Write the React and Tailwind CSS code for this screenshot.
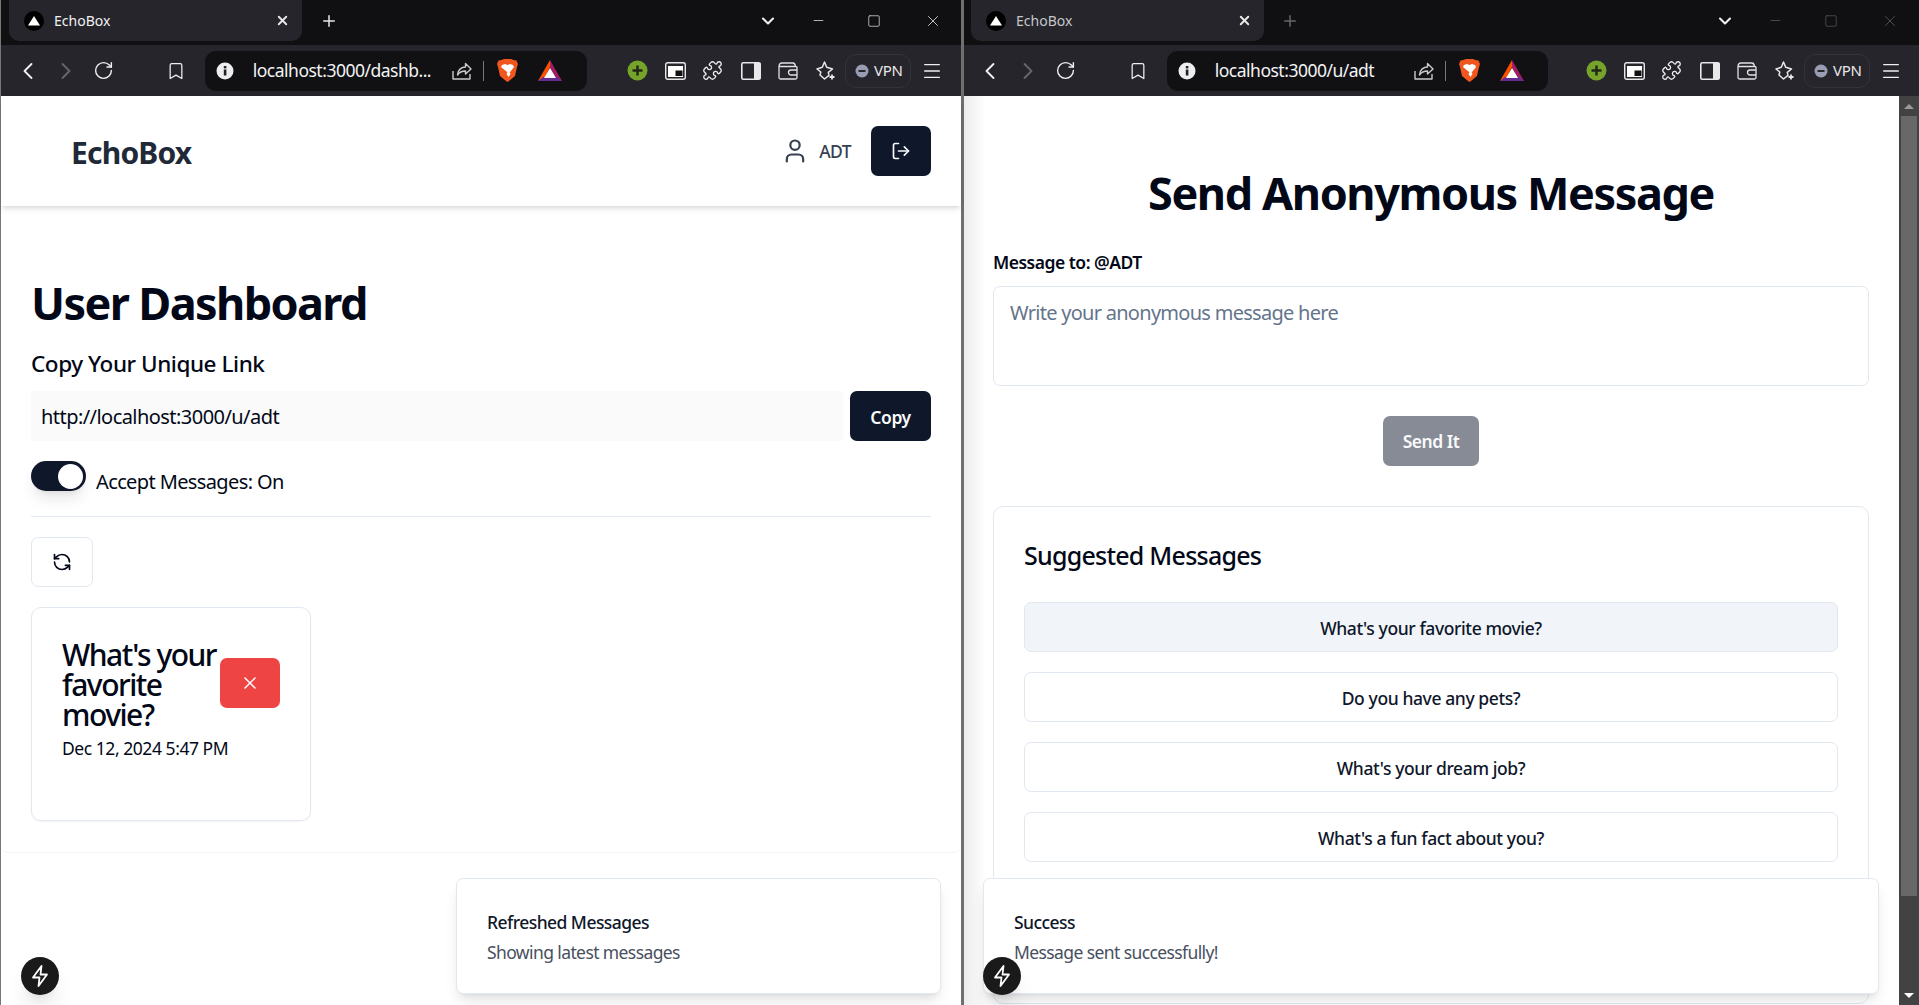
import React from "react";
import { ChevronLeft, ChevronRight, RotateCw, Bookmark, Puzzle, User, LogOut, RefreshCcw, X, Plus, ChevronDown, Minus, Square, Menu } from "lucide-react";

const Favicon = () => (
  <svg width="20" height="20" viewBox="0 0 20 20"><circle cx="10" cy="10" r="10" fill="#000" /><polygon points="10,5 16,14.5 4,14.5" fill="#fff" /></svg>
);
const Share = () => (
  <svg width="20" height="20" viewBox="0 0 20 20" fill="none" stroke="#c9c9ce" strokeWidth="1.4" strokeLinejoin="round"><path d="M1 10v8h17v-5" /><path d="M5.500 14c0-5 4-8 8-8V2.500l5.500 5.500-5.500 5V10c-4 0-6 1-8 4z" /></svg>
);
const Brave = () => (
  <svg width="21" height="23" viewBox="0 0 21 23">
    <path d="M4.500 1 7 0h7l2.500 1 3 .5L21 5l-1 3-2 9-6 5-1.500 1-1.500-1-6-5-2-9-1-3 1.500-3.500z" fill="#f0561d" />
    <path d="M5 6l3-1 2.500 1 2.500-1 3 1 1 2-3.500 4.500-1 .5 1 2-2 3-2-3 1-2-1-.5L4 8z" fill="#fff" />
  </svg>
);
const Bat = () => (
  <svg width="24" height="21" viewBox="0 0 24 21">
    <polygon points="12,0 24,21 17,21 12,11" fill="#9e1f63" />
    <polygon points="12,0 0,21 7,17 12,7" fill="#ff5000" />
    <polygon points="0,21 24,21 19,17 5,17" fill="#662d91" />
    <polygon points="12,8 18,18 6,18" fill="#fff" />
  </svg>
);
const GreenPlus = () => (
  <svg width="21" height="21" viewBox="0 0 21 21"><circle cx="10.500" cy="10.500" r="10" fill="#76a32a" /><path d="M10.500 5.500v10M5.500 10.500h10" stroke="#20261a" strokeWidth="2.400" /></svg>
);
const Pip = () => (
  <svg width="21" height="18" viewBox="0 0 21 18"><rect x="0.700" y="0.700" width="19.600" height="16.600" rx="2" fill="#26262c" stroke="#e8e8ea" strokeWidth="1.400" /><rect x="3" y="4" width="15" height="11" fill="#fff" /><rect x="10.500" y="8.500" width="7" height="5.500" fill="#111" /></svg>
);
const Side = () => (
  <svg width="20" height="18" viewBox="0 0 20 18"><rect x="0.800" y="0.800" width="18.400" height="16.400" rx="1.500" fill="none" stroke="#e8e8ea" strokeWidth="1.600" /><rect x="13" y="1" width="6.500" height="16" fill="#e8e8ea" /></svg>
);
const Wallet = () => (
  <svg width="20" height="18" viewBox="0 0 20 18" fill="none" stroke="#e2e2e4" strokeWidth="1.300"><path d="M1 4.500V15.500a1.500 1.500 0 0 0 1.500 1.500h15a1.500 1.500 0 0 0 1.500-1.500V5.500a1 1 0 0 0-1-1H1zM1 4.500C1 2.500 2 1 4 1h11c1.500 0 2 1 2.500 3" /><path d="M19 8h-6a2 2 0 0 0 0 5h6" /></svg>
);
const Spark = () => (
  <svg width="20" height="20" viewBox="0 0 20 20" fill="none" stroke="#e8e8ea" strokeWidth="1.500" strokeLinejoin="round"><path d="M8.500 1l2.200 5.300L16.500 8l-4.200 3.300.7 3-4.500 3.700L4 14l.8-3L1 8l5.300-1.700z" /><path d="M16 13.500v5M13.500 16h5" strokeWidth="1.800" /></svg>
);
const Bolt = ({ s = 18 }) => (
  <svg width={s} height={s + 4} viewBox="0 0 18 22" fill="none" stroke="#fff" strokeWidth="1.800" strokeLinejoin="round"><path d="M10.500 1 2 12.500h6.500L7.500 21 16 9.500H9.500z" /></svg>
);

const Ico = ({ children }) => <div className="w-[37.7px] h-[38px] flex items-center justify-center shrink-0">{children}</div>;

function Chrome({ url, pl, tabMl, dimPlus, dimWin, plusMl, chevMl, urlW, urlTextW, afterMl }) {
  const wc = dimWin ? "#5b5b60" : "#e8e8ea";
  return (
    <div className="shrink-0">
      <div className="h-[45px] bg-[#101013] flex items-start">
        <div className={`${tabMl} w-[293px] h-[41px] bg-[#25252b] rounded-[10px] rounded-t-none flex items-center pl-[15px] shrink-0`}>
          <Favicon />
          <span className={`ml-[10px] text-[14px] w-[221px] shrink-0 ${dimPlus ? "text-[#c6c6ca]" : "text-[#f0f0f2]"}`}>EchoBox</span>
          <X size={15} strokeWidth={3} color="#e8e8ea" />
        </div>
        <div className={`${plusMl} h-[41px] flex items-center`}>
          <Plus size={18} strokeWidth={2} color={dimPlus ? "#66666b" : "#e8e8ea"} />
        </div>
        <div className={`${chevMl} h-[41px] flex items-center`}>
          <ChevronDown size={20} strokeWidth={2.500} color="#f0f0f2" />
        </div>
        <div className="ml-[33px] h-[41px] flex items-center"><Minus size={15} strokeWidth={1.200} color={wc} /></div>
        <div className="ml-[41px] h-[41px] flex items-center"><Square size={14} strokeWidth={1.200} color={wc} /></div>
        <div className="ml-[43px] h-[41px] flex items-center"><X size={18} strokeWidth={1.100} color={wc} /></div>
      </div>
      <div className={`h-[51px] bg-[#25252b] flex items-center ${pl}`}>
        <Ico><ChevronLeft size={28} strokeWidth={1.600} color="#f0f0f2" /></Ico>
        <Ico><ChevronRight size={28} strokeWidth={1.600} color="#66666b" /></Ico>
        <Ico><RotateCw size={21} strokeWidth={1.600} color="#f0f0f2" /></Ico>
        <div className="ml-[35px]"><Ico><Bookmark size={20} strokeWidth={1.500} color="#f0f0f2" /></Ico></div>
        <div className={`ml-[10px] ${urlW} h-[40px] rounded-[11px] bg-[#111114] flex items-center pl-[8px] shrink-0`}>
          <div className="w-[24px] flex justify-center"><svg width="18" height="18" viewBox="0 0 18 18"><circle cx="9" cy="9" r="8.500" fill="#eeeef0" /><rect x="7.800" y="7.500" width="2.600" height="6" fill="#222" /><rect x="7.800" y="4" width="2.600" height="2.400" fill="#222" /></svg></div>
          <span className={`ml-[16px] ${urlTextW} text-[17.500px] text-[#f3f3f5] whitespace-nowrap tracking-[-0.5px]`}>{url}</span>
          <div className="w-[24px] flex justify-center"><Share /></div>
          <div className="ml-[9px] w-px h-[20px] bg-[#77777c]" />
          <div className="ml-[12px] w-[24px] flex justify-center"><Brave /></div>
          <div className="ml-[18px] w-[24px] flex justify-center"><Bat /></div>
        </div>
        <div className={afterMl}><Ico><GreenPlus /></Ico></div>
        <Ico><Pip /></Ico>
        <Ico><Puzzle size={21} strokeWidth={1.500} color="#f0f0f2" /></Ico>
        <Ico><Side /></Ico>
        <Ico><Wallet /></Ico>
        <Ico><Spark /></Ico>
        <div className="w-[66px] h-[34px] rounded-[11px] border border-[#323238] flex items-center pl-[9px] shrink-0">
          <svg width="14" height="14" viewBox="0 0 14 14"><circle cx="7" cy="7" r="6.500" fill="#9a9cb4" /><rect x="3.500" y="6" width="7" height="2" fill="#26262c" /></svg>
          <span className="ml-[5px] text-[15px] text-[#e8e8ea] tracking-[-0.2px]">VPN</span>
        </div>
        <div className="ml-[2px] w-[38px] flex justify-center shrink-0"><Menu size={22} strokeWidth={1.400} color="#f0f0f2" /></div>
      </div>
    </div>
  );
}

const Toast = ({ title, sub, cls }) => (
  <div className={`absolute top-[878px] h-[116px] bg-white border border-[#e2e8f0] rounded-[7px] shadow-lg flex flex-col justify-center pl-[30px] pt-[3px] text-[#020817] ${cls}`}>
    <div className="text-[17.500px] font-medium leading-[25px] text-[#0f172a] tracking-[-0.55px]">{title}</div>
    <div className="text-[17.500px] leading-[25px] mt-[5px] text-[#475060] tracking-[-0.6px]">{sub}</div>
  </div>
);

const Badge = ({ cls }) => (
  <div className={`absolute top-[957px] w-[38px] h-[38px] rounded-full bg-[#1a1a1a] shadow-xl flex items-center justify-center ${cls}`}><Bolt /></div>
);

function Suggest({ children, active }) {
  return (
    <div className={`h-[50px] pt-[2px] rounded-[7px] border border-[#e2e8f0] flex items-center justify-center text-[17.500px] font-medium text-[#0f172a] ${active ? "bg-[#f1f5f9]" : "bg-white"}`}>{children}</div>
  );
}

export default function App() {
  return (
    <div className="relative w-[1919px] h-[1005px] overflow-hidden flex bg-white font-['Noto_Sans',sans-serif] text-[#020817]">
      {/* Left window */}
      <div className="w-[964px] h-full shrink-0 flex flex-col border-l border-[#777] border-r-[3px] border-r-[#6f6f6f]">
        <Chrome url="localhost:3000/dashb..." pl="pl-[8px]" tabMl="ml-[8px]" plusMl="ml-[18px]" chevMl="ml-[420px]" urlW="w-[382px]" urlTextW="w-[197px]" afterMl="ml-[32px]" />
        <header className="h-[110px] shrink-0 flex items-center pl-[70px] pr-[30px] shadow-md bg-white">
          <span className="text-[30px] font-bold text-[#1f2937] tracking-[-0.8px] mt-[2px]">EchoBox</span>
          <div className="ml-auto flex items-center">
            <User size={28} strokeWidth={1.900} color="#374151" />
            <span className="ml-[10px] text-[17.500px] font-medium text-[#374151] tracking-[-0.6px]">ADT</span>
            <div className="ml-[20px] w-[60px] h-[50px] rounded-[7px] bg-[#0f172a] flex items-center justify-center"><LogOut size={20} strokeWidth={2} color="#f8fafc" /></div>
          </div>
        </header>
        <main className="mt-[10px] pl-[30px] pr-[30px] pb-[31px] rounded-b-[7px] border-b border-[#f1f3f6]">
          <h1 className="mt-[62px] text-[45px] leading-[50px] font-bold tracking-[-1.6px]">User Dashboard</h1>
          <h2 className="mt-[18px] text-[22.500px] leading-[35px] font-medium tracking-[-0.45px]">Copy Your Unique Link</h2>
          <div className="mt-[10px] flex">
            <div className="flex-1 h-[50px] bg-[#fafafa] flex items-center pl-[10px] pt-[1px] text-[20px] tracking-[-0.55px]">http://localhost:3000/u/adt</div>
            <div className="ml-[7px] w-[81px] h-[50px] rounded-[7px] bg-[#0f172a] text-[#f8fafc] text-[17.500px] font-semibold flex items-center justify-center pt-[2px] tracking-[-0.4px]">Copy</div>
          </div>
          <div className="mt-[20px] flex items-start">
            <div className="w-[55px] h-[30px] rounded-full bg-[#0f172a] flex items-center justify-end pr-[3px] shadow-lg"><div className="w-[25px] h-[25px] rounded-full bg-white" /></div>
            <span className="ml-[10px] mt-[6px] text-[20px] leading-[30px] tracking-[-0.62px]">Accept Messages: On</span>
          </div>
          <div className="mt-[19px] h-px bg-[#e2e8f0]" />
          <div className="mt-[20px] w-[62px] h-[50px] rounded-[7px] border border-[#e2e8f0] flex items-center justify-center"><RefreshCcw size={20} strokeWidth={2} /></div>
          <div className="mt-[20px] w-[280px] h-[214px] rounded-[10px] border border-[#e2e8f0] pl-[30px] pt-[32px] shadow-xs">
            <div className="flex items-center">
              <div className="w-[158px] text-[30px] leading-[30px] font-medium tracking-[-1.5px] whitespace-nowrap">What's your<br />favorite<br />movie?</div>
              <div className="mt-[-5px] w-[60px] h-[50px] rounded-[7px] bg-[#ef4444] flex items-center justify-center"><X size={20} strokeWidth={1.800} color="#fff" /></div>
            </div>
            <div className="mt-[6px] text-[17.500px] leading-[25px] tracking-[-0.45px]">Dec 12, 2024 5:47 PM</div>
          </div>
        </main>
      </div>

      {/* Right window */}
      <div className="relative flex-1 h-full flex flex-col">
        <Chrome url="localhost:3000/u/adt" pl="pl-[7px]" tabMl="ml-[7px]" dimPlus dimWin plusMl="ml-[17px]" chevMl="ml-[416px]" urlW="w-[381px]" urlTextW="w-[197px]" afterMl="ml-[30px]" />
        <div className="flex-1 flex min-h-0 bg-gradient-to-r from-[#ececec] to-white to-[22px]">
          <div className="flex-1 pl-[29px] pr-[30px]">
            <h1 className="mt-[72px] text-center text-[45px] leading-[50px] font-bold tracking-[-1.4px]">Send Anonymous Message</h1>
            <div className="mt-[32px] text-[17.500px] leading-[25px] font-semibold tracking-[-0.5px]">Message to: @ADT</div>
            <div className="mt-[11px] h-[100px] rounded-[7px] border border-[#e2e8f0] bg-white pl-[16px] pt-[11px] text-[20px] leading-[30px] text-[#64748b] tracking-[-0.72px]">Write your anonymous message here</div>
            <div className="mt-[30px] flex justify-center"><div className="w-[96px] h-[50px] rounded-[7px] bg-[#878b95] text-[#f8fafc] text-[17.500px] font-semibold flex items-center justify-center pt-[1px] tracking-[-0.5px]">Send It</div></div>
            <div className="mt-[40px] h-[498px] rounded-[10px] border border-[#e2e8f0] bg-white px-[30px] pt-[31px]">
              <div className="text-[25px] leading-[35px] font-medium tracking-[-0.75px]">Suggested Messages</div>
              <div className="mt-[29px] flex flex-col gap-[20px] tracking-[-0.4px]">
                <Suggest active>What's your favorite movie?</Suggest>
                <Suggest>Do you have any pets?</Suggest>
                <Suggest>What's your dream job?</Suggest>
                <Suggest>What's a fun fact about you?</Suggest>
              </div>
            </div>
          </div>
          <div className="w-[20px] bg-[#424242] relative flex flex-col shrink-0">
            <div className="h-[20px] flex items-center justify-center"><div className="w-0 h-0 border-x-[5px] border-x-transparent border-b-[5px] border-b-[#9a9a9a]" /></div>
            <div className="mx-[2px] h-[780px] bg-[#686868]" />
            <div className="mt-auto h-[20px] flex items-center justify-center"><div className="w-0 h-0 border-x-[5px] border-x-transparent border-t-[5px] border-t-white" /></div>
          </div>
        </div>
      </div>

      <Toast title="Refreshed Messages" sub="Showing latest messages" cls="left-[456px] w-[485px]" />
      <Toast title="Success" sub="Message sent successfully!" cls="left-[983px] w-[896px]" />
      <Badge cls="left-[21px]" />
      <Badge cls="left-[983px]" />
    </div>
  );
}
